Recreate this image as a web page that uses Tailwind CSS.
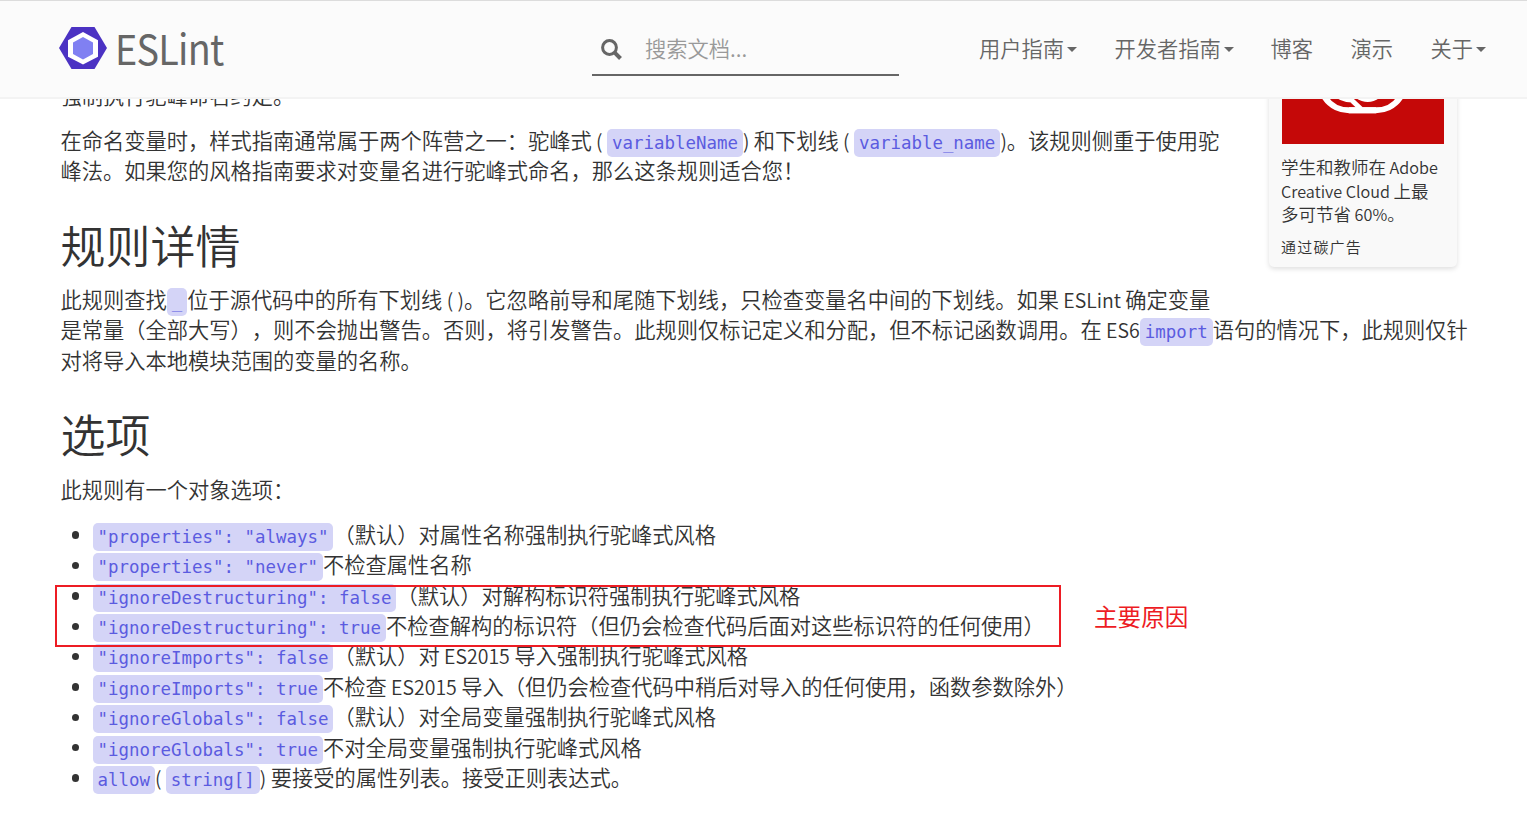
<!DOCTYPE html>
<html lang="zh-CN">
  <head>
    <meta charset="UTF-8" />
    <meta name="viewport" content="width=device-width, initial-scale=1.0" />
    <title>camelcase - ESLint</title>
    <script src="https://cdn.jsdelivr.net/npm/@tailwindcss/browser@4"></script>
  </head>
  <body class="relative h-[828px] overflow-hidden bg-white font-['Noto_Sans_CJK_SC',sans-serif] text-[21.25px] leading-[30.36px] font-[350] text-[#333] [text-spacing-trim:space-all]">
    <!-- Navbar -->
    <header class="absolute inset-x-0 top-0 z-10 flex h-[99px] items-start border-t border-b-2 border-t-[#dcdcdc] border-b-[#f3f3f3] bg-[#fbfbfb] text-[#666]">
      <a href="#" class="mt-[25px] ml-[59px] flex w-[533px] items-start">
        <svg class="mt-px h-[42px] w-[48px]" viewBox="0 0 48 42">
          <path fill="#4b32c3" d="M12.500 0h23L48 21 35.500 42h-23L0 21z" />
          <path fill="#fff" d="M24 5l15 8.300v16.400L24 37.500 9 29.700V13.300z" />
          <path fill="#8080f2" d="M24 10l10 5.500v11.500L24 32.500 14 27V15.500z" />
        </svg>
        <span class="-mt-[2px] ml-[8px] origin-left scale-x-91 text-[41.500px] leading-[46px] font-normal tracking-[-0.800px]">ESLint</span>
      </a>
      <div class="mt-[24px] flex h-[51px] w-[307px] items-center border-b-2 border-[#666]">
        <svg class="ml-[9px] h-[21px] w-[21px]" viewBox="0 0 21 21" fill="none" stroke="#666">
          <circle cx="8.500" cy="8.500" r="6.900" stroke-width="3" />
          <path stroke-width="4" d="M13.200 13.200l6.300 6.300" />
        </svg>
        <input type="text" placeholder="搜索文档..." class="mb-[2px] ml-[23px] w-[240px] placeholder:text-[#999] focus:outline-none" />
      </div>
      <nav class="mt-[32px] ml-[80px] flex whitespace-nowrap">
        <a href="#" class="flex w-[135.500px] items-center">用户指南<span class="mt-[3px] ml-[3px] border-x-5 border-t-5 border-x-transparent border-t-[#666]"></span></a>
        <a href="#" class="flex w-[156px] items-center">开发者指南<span class="mt-[3px] ml-[3px] border-x-5 border-t-5 border-x-transparent border-t-[#666]"></span></a>
        <a href="#" class="w-[80px]">博客</a>
        <a href="#" class="w-[80px]">演示</a>
        <a href="#" class="flex items-center">关于<span class="mt-[3px] ml-[3px] border-x-5 border-t-5 border-x-transparent border-t-[#666]"></span></a>
      </nav>
    </header>

    <!-- Ad card -->
    <aside class="absolute top-[20px] left-[1269px] h-[247px] w-[188px] rounded-[5px] bg-[#f9f9f9] px-[13px] pt-[2px] shadow-[0_2px_5px_rgba(0,0,0,0.13)]">
      <svg class="h-[122px] w-[162px]" viewBox="0 0 162 122">
        <path fill="#c50808" d="M0 0h162v122H0z" />
        <g fill="none" stroke="#fff" stroke-width="6">
          <path d="M94 88.300H67a29 29 0 1 1 20-50l14 14" />
          <path d="M67 88.300h27a29 29 0 1 0-20-50" />
          <path d="M52 70q7 8 18 8M62 71l17 16M75 74q11 7 21 0" stroke-width="5" />
        </g>
      </svg>
      <p class="mt-[11px] -ml-px text-[17.500px] leading-[23.500px] whitespace-nowrap">学生和教师在<span class="text-[16.200px] leading-none"> Adobe</span><br /><span class="text-[16.200px] leading-none">Creative Cloud </span>上最<br />多可节省<span class="text-[16.200px] leading-none"> 60%</span>。</p>
      <p class="mt-[9px] -ml-px text-[15px] leading-[24px] tracking-[1.200px]">通过碳广告</p>
    </aside>

    <!-- Rule docs -->
    <main class="px-[60.500px] pt-[79.500px] whitespace-nowrap">
      <p class="mb-[15px]">强制执行驼峰命名约定。</p>
      <p>在命名变量时，样式指南通常属于两个阵营之一：驼峰式<span class="text-[19.500px] leading-none"> ( </span><code class="rounded-[5px] bg-[#d4d4f7] px-[5px] py-[4px] font-['DejaVu_Sans_Mono',monospace] text-[17.450px] leading-none font-normal text-[#5b5be0]">variableName</code><span class="text-[19.500px] leading-none">) </span>和下划线<span class="text-[19.500px] leading-none"> ( </span><code class="rounded-[5px] bg-[#d4d4f7] px-[5px] py-[4px] font-['DejaVu_Sans_Mono',monospace] text-[17.450px] leading-none font-normal text-[#5b5be0]">variable_name</code><span class="text-[19.500px] leading-none">)</span>。该规则侧重于使用驼<br />峰法。如果您的风格指南要求对变量名进行驼峰式命名，那么这条规则适合您！</p>

      <h2 class="mt-[34px] mb-[15px] text-[45px] leading-[49.500px]">规则详情</h2>
      <p>此规则查找<code class="rounded-[5px] bg-[#d4d4f7] px-[5px] py-[4px] font-['DejaVu_Sans_Mono',monospace] text-[17.450px] leading-none font-normal text-[#5b5be0]">_</code>位于源代码中的所有下划线<span class="text-[19.500px] leading-none"> ( )</span>。它忽略前导和尾随下划线，只检查变量名中间的下划线。如果<span class="text-[19.500px] leading-none"> ESLint </span>确定变量<br />是常量（全部大写），则不会抛出警告。否则，将引发警告。此规则仅标记定义和分配，但不标记函数调用。在<span class="text-[19.500px] leading-none"> ES6</span><code class="rounded-[5px] bg-[#d4d4f7] px-[5px] py-[4px] font-['DejaVu_Sans_Mono',monospace] text-[17.450px] leading-none font-normal text-[#5b5be0]">import</code>语句的情况下，此规则仅针<br />对将导入本地模块范围的变量的名称。</p>

      <h2 class="mt-[34px] mb-[15px] text-[45px] leading-[49.500px]">选项</h2>
      <p class="mb-[15px]">此规则有一个对象选项：</p>
      <ul id="options"></ul>
    </main>

    <!-- Annotation -->
    <div class="absolute top-[585px] left-[55px] h-[62px] w-[1006px] border-2 border-[#ed1c24]"></div>
    <p class="absolute top-[601px] left-[1094px] text-[23.600px] font-normal text-[#ed1c24]">主要原因</p>

    <script>
      const latin = (text) => `<span class="text-[19.500px] leading-none">${text}</span>`;
      const code = (text) =>
        `<code class="rounded-[5px] bg-[#d4d4f7] px-[5px] py-[4px] font-['DejaVu_Sans_Mono',monospace] text-[17.450px] leading-none font-normal text-[#5b5be0]">${text}</code>`;
      const item = (html) =>
        `<li class="flex h-[30.36px] items-center"><span class="mt-[2px] mr-[13.500px] ml-[11px] size-[7.500px] rounded-full bg-[#333]"></span><span>${html}</span></li>`;

      const options = [
        ['"properties": "always"', '（默认）对属性名称强制执行驼峰式风格'],
        ['"properties": "never"', '不检查属性名称'],
        ['"ignoreDestructuring": false', '（默认）对解构标识符强制执行驼峰式风格'],
        ['"ignoreDestructuring": true', '不检查解构的标识符（但仍会检查代码后面对这些标识符的任何使用）'],
        ['"ignoreImports": false', '（默认）对' + latin(' ES2015 ') + '导入强制执行驼峰式风格'],
        ['"ignoreImports": true', '不检查' + latin(' ES2015 ') + '导入（但仍会检查代码中稍后对导入的任何使用，函数参数除外）'],
        ['"ignoreGlobals": false', '（默认）对全局变量强制执行驼峰式风格'],
        ['"ignoreGlobals": true', '不对全局变量强制执行驼峰式风格'],
      ];

      document.getElementById('options').innerHTML =
        options.map(([name, text]) => item(code(name) + text)).join('') +
        item(code('allow') + latin('( ') + code('string[]') + latin(') ') + '要接受的属性列表。接受正则表达式。');
    </script>
  </body>
</html>
